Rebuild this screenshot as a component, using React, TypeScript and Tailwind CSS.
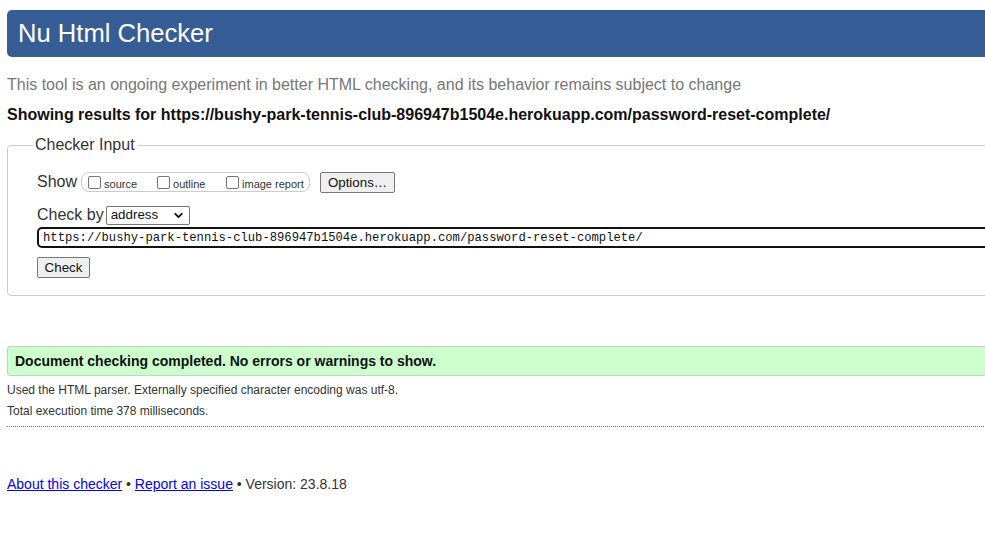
import { FiChevronDown } from 'react-icons/fi';

const sans = { fontFamily: '"Liberation Sans", Arial, sans-serif' };

const Box = ({ label, wide }: { label: string; wide?: string }) => (
  <span className={`flex items-end ${wide ?? ''}`}>
    <span className="inline-block w-[13px] h-[13px] border border-[#767676] rounded-[2px] bg-white mr-[3px]" />
    <span className="text-[11px] leading-[11px] translate-y-[1px]">{label}</span>
  </span>
);

const App = () => {
  return (
    <div className="w-[985px] h-[541px] overflow-hidden bg-white text-[#111]" style={sans}>
      <div className="w-[1100px] pl-[7px]">
        {/* Header */}
        <h1 className="mt-[10px] h-[47px] bg-[#365d95] rounded-l-[5px] text-white text-[25.6px] leading-[47px] pl-[11px]">
          Nu Html Checker
        </h1>

        <p className="mt-[18px] text-[16px] text-[#777] leading-[20px]">
          This tool is an ongoing experiment in better HTML checking, and its behavior remains subject to change
        </p>
        <p className="mt-[10px] text-[16px] font-bold leading-[20px]">
          Showing results for https://bushy-park-tennis-club-896947b1504e.herokuapp.com/password-reset-complete/
        </p>

        {/* Checker input */}
        <fieldset className="mt-[11px] border border-[#ccc] rounded-l-[4px] pl-[29px] h-[160px]">
          <legend className="ml-[-4px] px-[2px] text-[16px] text-[#333] leading-[18px]">Checker Input</legend>

          <div className="flex items-center mt-[17px] h-[22px]">
            <span className="text-[16px] text-[#333] mr-[4px]">Show</span>
            <div className="flex items-center h-[20px] w-[229px] border border-[#ccc] rounded-[8px] pl-[6px] text-[#333]">
              <Box label="source" wide="w-[69px]" />
              <Box label="outline" wide="w-[69px]" />
              <Box label="image report" />
            </div>
            <button className="ml-[10px] h-[21px] w-[75px] bg-[#efefef] border border-[#767676] rounded-[2px] text-[13.33px] text-[#111]">
              Options…
            </button>
          </div>

          <div className="flex items-center mt-[12px] h-[20px]">
            <span className="text-[16px] text-[#333] mr-[2px]">Check by</span>
            <div className="flex items-center justify-between w-[84px] h-[19px] border border-[#767676] rounded-[2px] pl-[4px] pr-[4px] text-[13.33px] text-[#111]">
              <span>address</span>
              <FiChevronDown className="text-[13px]" strokeWidth={3.5} />
            </div>
          </div>

          <div className="mt-[2px] h-[21px] border-2 border-[#111] rounded-l-[5px] flex items-center pl-[4px] pt-[2px]">
            <span className="text-[12.2px] text-[#111]" style={{ fontFamily: '"Liberation Mono", "DejaVu Sans Mono", monospace' }}>
              https://bushy-park-tennis-club-896947b1504e.herokuapp.com/password-reset-complete/
            </span>
          </div>

          <button className="mt-[9px] h-[21px] w-[53px] bg-[#efefef] border border-[#767676] rounded-[2px] text-[13.33px] text-[#111]">
            Check
          </button>
        </fieldset>

        {/* Result */}
        <div className="mt-[50px] h-[30px] bg-[#ccffcc] border border-[#ccc] rounded-l-[3px] flex items-center pl-[7px]">
          <span className="text-[14px] font-bold text-[#111]">Document checking completed. No errors or warnings to show.</span>
        </div>

        <p className="mt-[7px] text-[12px] text-[#333] leading-[14px]">
          Used the HTML parser. Externally specified character encoding was utf-8.
        </p>
        <p className="mt-[7px] text-[12px] text-[#333] leading-[14px]">Total execution time 378 milliseconds.</p>

        <div className="mt-[8px] border-t border-dotted border-[#777]" />

        {/* Footer */}
        <p className="mt-[49px] text-[14px] text-[#333] leading-[16px]">
          <a href="#" className="text-[#0000ee] underline">About this checker</a>
          {' • '}
          <a href="#" className="text-[#0000ee] underline">Report an issue</a>
          {' • Version: 23.8.18'}
        </p>
      </div>
    </div>
  );
};

export default App;
